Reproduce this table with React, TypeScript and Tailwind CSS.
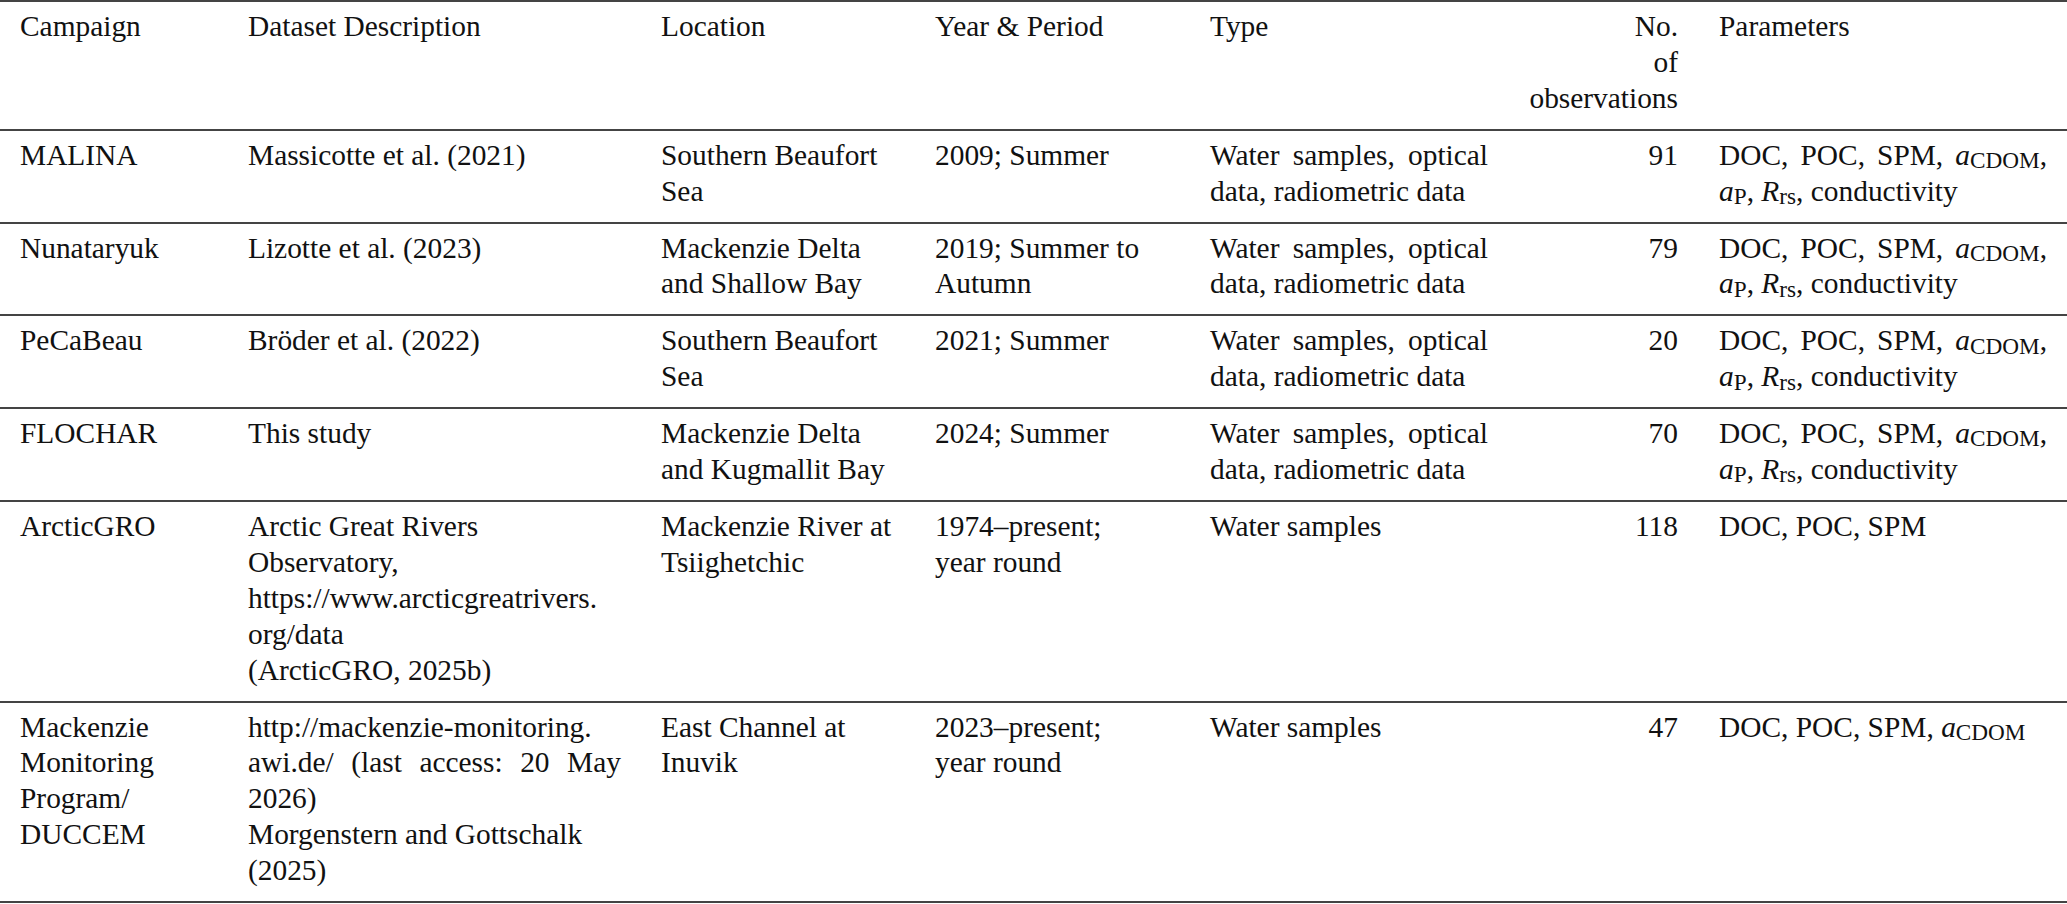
import type { ReactNode } from "react";

type Line = { text: ReactNode; justify?: boolean };
type Row = {
    campaign: Line[];
    dataset: Line[];
    location: Line[];
    period: Line[];
    type: Line[];
    obs: Line[];
    params: Line[];
};

const l = (...texts: ReactNode[]): Line[] => texts.map((text) => ({ text }));
const j = (text: ReactNode): Line => ({ text, justify: true });

const Sub = ({ children }: { children: ReactNode }) => (
    <sub className="text-[0.79em] bottom-[-0.14em]">{children}</sub>
);

const aCDOM = <><i>a</i><Sub>CDOM</Sub></>;
const fullParams: Line[] = [
    j(<>DOC, POC, SPM, {aCDOM},</>),
    { text: <><i>a</i><Sub>P</Sub>, <i>R</i><Sub>rs</Sub>, conductivity</> },
];
const fullType: Line[] = [j("Water samples, optical"), { text: "data, radiometric data" }];

const header: Row = {
    campaign: l("Campaign"),
    dataset: l("Dataset Description"),
    location: l("Location"),
    period: l("Year & Period"),
    type: l("Type"),
    obs: l("No.", "of", "observations"),
    params: l("Parameters"),
};

const rows: Row[] = [
    {
        campaign: l("MALINA"),
        dataset: l("Massicotte et al. (2021)"),
        location: l("Southern Beaufort", "Sea"),
        period: l("2009; Summer"),
        type: fullType,
        obs: l("91"),
        params: fullParams,
    },
    {
        campaign: l("Nunataryuk"),
        dataset: l("Lizotte et al. (2023)"),
        location: l("Mackenzie Delta", "and Shallow Bay"),
        period: l("2019; Summer to", "Autumn"),
        type: fullType,
        obs: l("79"),
        params: fullParams,
    },
    {
        campaign: l("PeCaBeau"),
        dataset: l("Bröder et al. (2022)"),
        location: l("Southern Beaufort", "Sea"),
        period: l("2021; Summer"),
        type: fullType,
        obs: l("20"),
        params: fullParams,
    },
    {
        campaign: l("FLOCHAR"),
        dataset: l("This study"),
        location: l("Mackenzie Delta", "and Kugmallit Bay"),
        period: l("2024; Summer"),
        type: fullType,
        obs: l("70"),
        params: fullParams,
    },
    {
        campaign: l("ArcticGRO"),
        dataset: l(
            "Arctic Great Rivers",
            "Observatory,",
            "https://www.arcticgreatrivers.",
            "org/data",
            "(ArcticGRO, 2025b)"
        ),
        location: l("Mackenzie River at", "Tsiighetchic"),
        period: l("1974–present;", "year round"),
        type: l("Water samples"),
        obs: l("118"),
        params: l("DOC, POC, SPM"),
    },
    {
        campaign: l("Mackenzie", "Monitoring", "Program/", "DUCCEM"),
        dataset: [
            { text: "http://mackenzie-monitoring." },
            j("awi.de/ (last access: 20 May"),
            { text: "2026)" },
            { text: "Morgenstern and Gottschalk" },
            { text: "(2025)" },
        ],
        location: l("East Channel at", "Inuvik"),
        period: l("2023–present;", "year round"),
        type: l("Water samples"),
        obs: l("47"),
        params: l(<>DOC, POC, SPM, {aCDOM}</>),
    },
];

const Cell = ({ lines, className }: { lines: Line[]; className: string }) => (
    <div className={className}>
        {lines.map((line, i) => (
            <div
                key={i}
                className={line.justify ? "text-justify [text-align-last:justify]" : "whitespace-nowrap"}
            >
                {line.text}
            </div>
        ))}
    </div>
);

const TableRow = ({ row }: { row: Row }) => (
    <div className="flex border-b-2 border-[#444] pl-[20px] pt-[7px] pb-[12px]">
        <Cell lines={row.campaign} className="w-[228px] shrink-0" />
        <Cell lines={row.dataset} className="w-[413px] shrink-0 pr-[40px]" />
        <Cell lines={row.location} className="w-[274px] shrink-0 pr-[40px]" />
        <Cell lines={row.period} className="w-[275px] shrink-0 pr-[40px]" />
        <Cell lines={row.type} className="w-[278px] shrink-0" />
        <Cell lines={row.obs} className="w-[190px] shrink-0 text-right" />
        <Cell lines={row.params} className="w-[369px] shrink-0 pl-[41px]" />
    </div>
);

export default function App() {
    return (
        <div className="w-[2067px] bg-white text-[#111] font-['Liberation_Serif',_'Times_New_Roman',_serif] text-[29.4px] leading-[35.9px]">
            <div className="border-t-2 border-[#444]">
                <TableRow row={header} />
                {rows.map((row, i) => (
                    <TableRow key={i} row={row} />
                ))}
            </div>
        </div>
    );
}
